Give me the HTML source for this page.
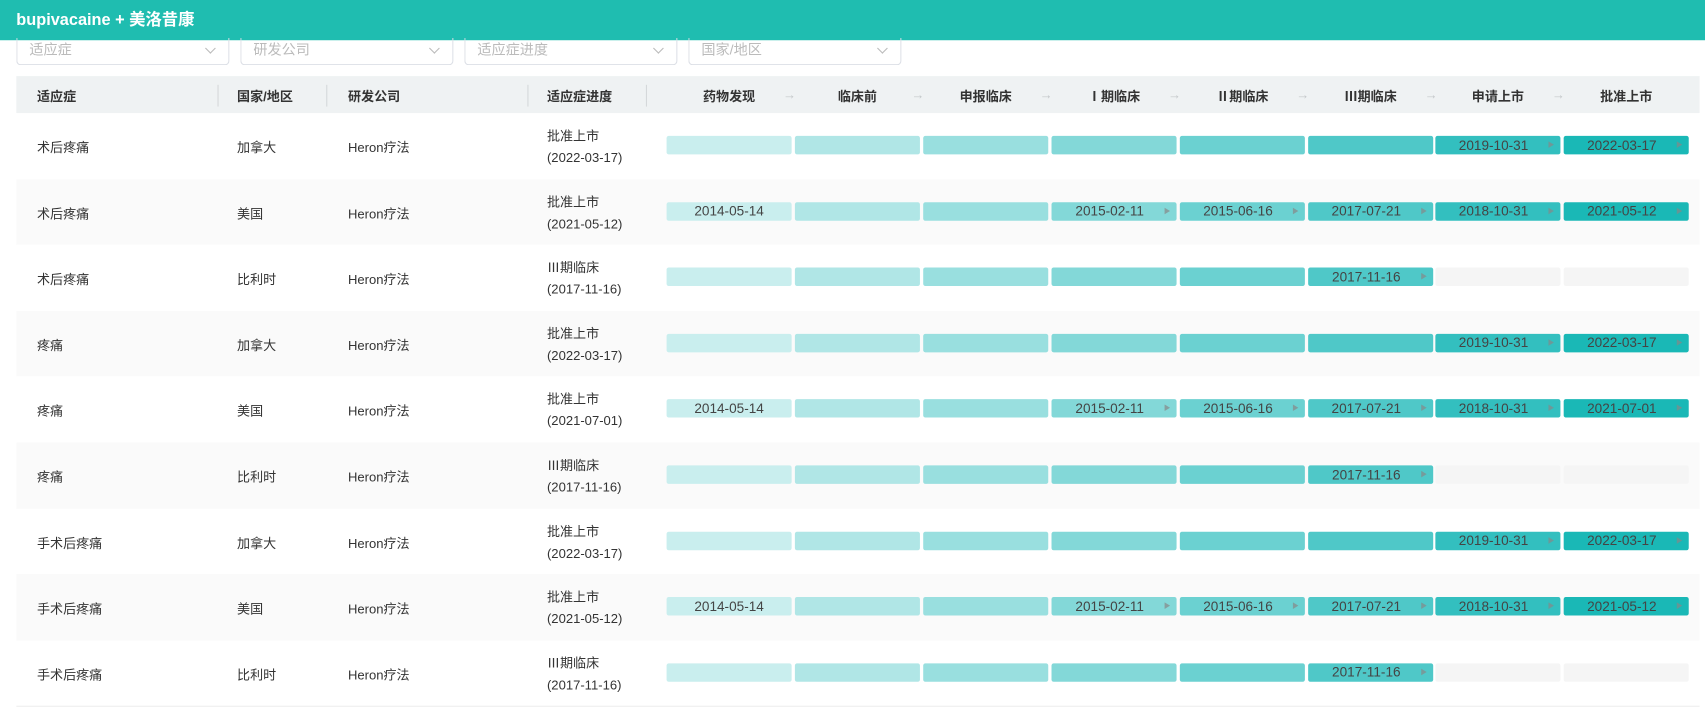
<!DOCTYPE html><html><head><meta charset="utf-8"><style>
*{margin:0;padding:0;box-sizing:border-box}
body{width:1705px;height:716px;background:#fff;font-family:"Liberation Sans","Noto Sans CJK SC",sans-serif;font-size:12px;color:#333;position:relative;overflow:hidden}
#w{position:absolute;left:0;top:0;width:1568px;height:659px;transform:scale(1.0874);transform-origin:0 0}
.top{position:absolute;left:0;top:0;width:1568px;height:37px;background:#1fbdb0;color:#fff;font-weight:bold;font-size:15px;line-height:37px;padding-left:15px}
.sel{position:absolute;top:35px;height:25px;width:196px;border:1px solid #dcdfe6;border-top:none;border-radius:0 0 4px 4px;color:#bbb;font-size:13px;padding-left:11px;line-height:22px}
.sel:after{content:"";position:absolute;right:13px;top:6px;width:6px;height:6px;border-right:1px solid #bbb;border-bottom:1px solid #bbb;transform:rotate(45deg)}
.thead{position:absolute;left:15px;top:70px;width:1548px;height:34px;background:#eff2f3;font-weight:bold}
.abs{position:absolute}
.sep{position:absolute;top:8px;width:1px;height:20px;background:#d5d8da}
.row{position:absolute;left:15px;width:1548px;height:61px}
.bar{position:absolute;height:17px;width:115px;border-radius:2px;display:flex;align-items:center;justify-content:center;font-size:12.5px;color:#444}
.bar i{position:absolute;right:6px;top:5px;width:0;height:0;border-left:5px solid #888;border-top:3.5px solid transparent;border-bottom:3.5px solid transparent;opacity:.7}
.arr{position:absolute;top:10px;color:#c4c8ca;font-size:12px}
</style></head><body><div id="w">
<div class="top">bupivacaine + 美洛昔康</div>
<div class="sel" style="left:15px">适应症</div>
<div class="sel" style="left:221px">研发公司</div>
<div class="sel" style="left:427px">适应症进度</div>
<div class="sel" style="left:633px">国家/地区</div>
<div class="thead">
<span class="abs" style="left:19px;top:10px">适应症</span><div class="sep" style="left:185px"></div>
<span class="abs" style="left:203px;top:10px">国家/地区</span><div class="sep" style="left:285px"></div>
<span class="abs" style="left:305px;top:10px">研发公司</span><div class="sep" style="left:470px"></div>
<span class="abs" style="left:488px;top:10px">适应症进度</span><div class="sep" style="left:579px"></div>
<div id="hs"></div>
</div>
<div id="rows"></div>
</div>
<script>
var cols=[613,731,849,967,1085,1203,1320,1438];
var cl=['#c9eeee','#b0e6e6','#99dfdf','#83d8d8','#6bd1d1','#4fc8c8','#33bfbf','#1ab8b6'];
var hn=['药物发现','临床前','申报临床','Ⅰ期临床','Ⅱ期临床','Ⅲ期临床','申请上市','批准上市'];
var h='';
for(var i=0;i<8;i++){h+='<span class="abs" style="left:'+(cols[i]-15)+'px;width:115px;text-align:center;top:10px">'+hn[i]+'</span>';if(i<7)h+='<span class="arr" style="left:'+(cols[i]-15+107)+'px">→</span>';}
document.getElementById('hs').innerHTML=h;
var rows=[
['术后疼痛','加拿大','批准上市','(2022-03-17)',8,['','','','','','','2019-10-31','2022-03-17']],
['术后疼痛','美国','批准上市','(2021-05-12)',8,['2014-05-14','','','2015-02-11','2015-06-16','2017-07-21','2018-10-31','2021-05-12']],
['术后疼痛','比利时','Ⅲ期临床','(2017-11-16)',6,['','','','','','2017-11-16']],
['疼痛','加拿大','批准上市','(2022-03-17)',8,['','','','','','','2019-10-31','2022-03-17']],
['疼痛','美国','批准上市','(2021-07-01)',8,['2014-05-14','','','2015-02-11','2015-06-16','2017-07-21','2018-10-31','2021-07-01']],
['疼痛','比利时','Ⅲ期临床','(2017-11-16)',6,['','','','','','2017-11-16']],
['手术后疼痛','加拿大','批准上市','(2022-03-17)',8,['','','','','','','2019-10-31','2022-03-17']],
['手术后疼痛','美国','批准上市','(2021-05-12)',8,['2014-05-14','','','2015-02-11','2015-06-16','2017-07-21','2018-10-31','2021-05-12']],
['手术后疼痛','比利时','Ⅲ期临床','(2017-11-16)',6,['','','','','','2017-11-16']]];
var s='';
rows.forEach(function(r,k){var y=104+k*60.6;
s+='<div class="row" style="top:'+y+'px;background:'+(k%2?'#fafafa':'#fff')+'">';
s+='<span class="abs" style="left:19px;top:23px">'+r[0]+'</span><span class="abs" style="left:203px;top:23px">'+r[1]+'</span><span class="abs" style="left:305px;top:23px">Heron疗法</span>';
s+='<span class="abs" style="left:488px;top:12px">'+r[2]+'</span><span class="abs" style="left:488px;top:34px">'+r[3]+'</span>';
for(var i=0;i<8;i++){var on=i<r[4];var t=r[5][i]||'';
s+='<div class="bar" style="left:'+(cols[i]-15)+'px;top:21px;background:'+(on?cl[i]:'#f5f5f5')+'">'+(t&&i>0?'<span style="position:relative;left:-4px">'+t+'</span><i></i>':t)+'</div>';}
s+='</div>';});
s+='<div class="abs" style="left:15px;top:649px;width:1548px;height:1px;background:#eee"></div>';
document.getElementById('rows').innerHTML=s;
</script>
</body></html>
